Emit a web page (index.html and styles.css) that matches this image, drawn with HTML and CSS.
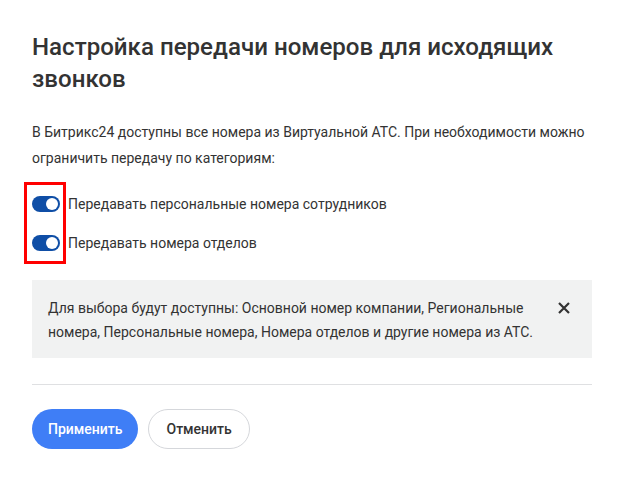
FILE: index.html
```html
<!DOCTYPE html>
<html lang="ru">
<head>
<meta charset="utf-8">
<link rel="stylesheet" href="styles.css">
</head>
<body>
<div class="dialog">
  <h1 class="title">Настройка передачи номеров для исходящих звонков</h1>
  <p class="lead">В Битрикс24 доступны все номера из Виртуальной АТС. При необходимости можно ограничить передачу по категориям:</p>
  <div class="options">
    <label class="option"><span class="toggle"><span class="knob"></span></span><span>Передавать персональные номера сотрудников</span></label>
    <label class="option"><span class="toggle"><span class="knob"></span></span><span>Передавать номера отделов</span></label>
    <div class="highlight"></div>
  </div>
  <div class="notice">
    <div class="notice-text">Для выбора будут доступны: Основной номер компании, Региональные номера, Персональные номера, Номера отделов и другие номера из АТС.</div>
    <button class="close" aria-label="Закрыть">
      <svg width="12" height="12" viewBox="0 0 12 12"><path d="M1 1L11 11M11 1L1 11" stroke="#333" stroke-width="2.2" stroke-linecap="butt"/></svg>
    </button>
  </div>
  <hr class="divider">
  <div class="actions">
    <button class="btn btn-primary">Применить</button>
    <button class="btn btn-secondary">Отменить</button>
  </div>
</div>
</body>
</html>
```
FILE: styles.css
```css
* { box-sizing: border-box; }
html, body { margin: 0; background: #fff; }
body {
  font-family: Roboto, "Noto Sans", sans-serif;
  color: #333;
  font-size: 14px;
}
.dialog {
  padding: 31px 32px 0 32px;
  display: flex;
  flex-direction: column;
}
.title {
  margin: 0;
  font-size: 24.1px;
  line-height: 32px;
  font-weight: 500;
  color: #333;
}
.lead {
  margin: 24px 0 0 0;
  line-height: 26px;
}
.options {
  position: relative;
  margin-top: 21px;
  display: flex;
  flex-direction: column;
  gap: 15px;
}
.option {
  display: flex;
  align-items: center;
  gap: 8px;
  height: 24px;
  line-height: 24px;
}
.toggle {
  width: 28px;
  height: 16px;
  border-radius: 8px;
  background: #0f4ea6;
  display: flex;
  align-items: center;
  justify-content: flex-end;
  padding-right: 2px;
}
.knob {
  width: 12px;
  height: 12px;
  border-radius: 50%;
  background: #fff;
}
.highlight {
  position: absolute;
  left: -8px;
  top: -10px;
  width: 42px;
  height: 82px;
  border: 3px solid #ff0000;
}
.notice {
  margin-top: 25px;
  background: #f1f2f2;
  padding: 16px 16px 14px 16px;
  display: flex;
  align-items: flex-start;
  gap: 10px;
}
.notice-text {
  flex: 1;
  line-height: 24px;
}
.close {
  width: 24px;
  height: 24px;
  border: 0;
  padding: 0;
  background: transparent;
  display: flex;
  align-items: center;
  justify-content: center;
}
.divider {
  margin: 26px 0 0 0;
  border: 0;
  border-top: 1px solid #dfe0e2;
  height: 0;
}
.actions {
  margin-top: 24px;
  display: flex;
  gap: 10px;
}
.btn {
  height: 40px;
  border-radius: 20px;
  padding: 0 16px;
  font-family: Roboto, "Noto Sans", sans-serif;
  font-size: 14px;
  font-weight: 500;
}
.btn-primary {
  background: #3f7ef6;
  color: #fff;
  border: 0;
}
.btn-secondary {
  background: #fff;
  color: #333;
  border: 1px solid #d5d7db;
  padding: 0 17px;
}
```
